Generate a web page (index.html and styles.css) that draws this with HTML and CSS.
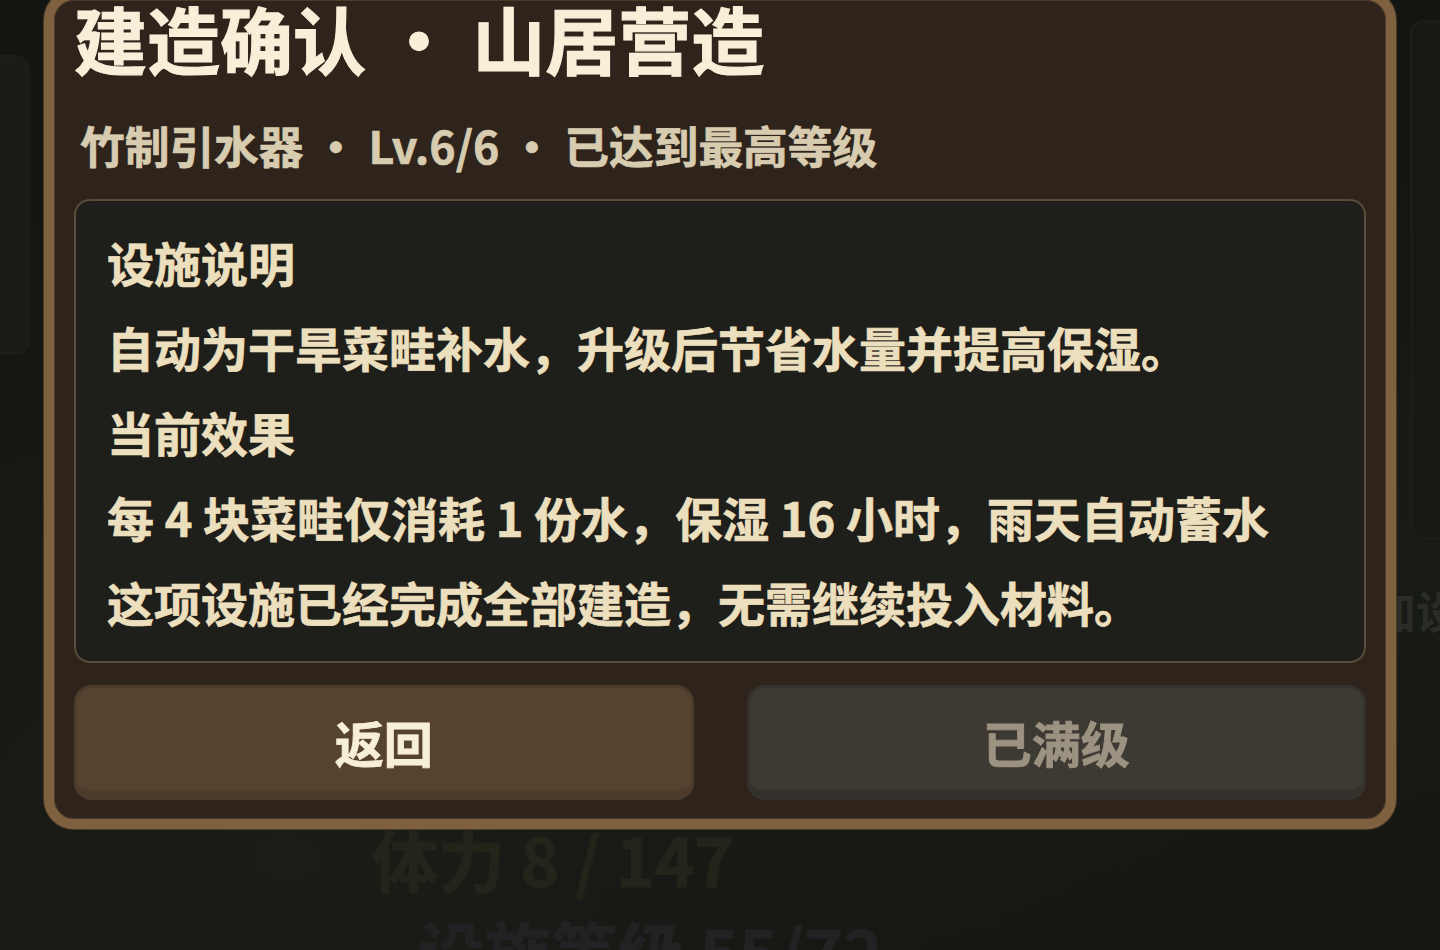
FILE: index.html
```html
<!DOCTYPE html>
<html lang="zh-CN">
<head>
<meta charset="utf-8">
<title>建造确认 · 山居营造</title>
<link rel="stylesheet" href="styles.css">
</head>
<body>
<div class="scene">
  <div class="bg-panel bg-panel-left"></div>
  <div class="bg-panel bg-panel-right"></div>
  <div class="bg-stat bg-stat-stamina">体力 8 / 147</div>
  <div class="bg-stat bg-stat-level">设施等级 55/72</div>
  <div class="bg-side-text">加设施</div>

  <div class="modal">
    <h1 class="modal-title">建造确认 · 山居营造</h1>
    <div class="modal-subtitle">竹制引水器 · Lv.6/6 · 已达到最高等级</div>
    <div class="info-box">
      <div class="info-line">设施说明</div>
      <div class="info-line">自动为干旱菜畦补水，升级后节省水量并提高保湿。</div>
      <div class="info-line">当前效果</div>
      <div class="info-line">每 4 块菜畦仅消耗 1 份水，保湿 16 小时，雨天自动蓄水</div>
      <div class="info-line">这项设施已经完成全部建造，无需继续投入材料。</div>
    </div>
    <div class="actions">
      <button class="btn btn-back" type="button">返回</button>
      <button class="btn btn-max" type="button" disabled>已满级</button>
    </div>
  </div>
</div>
</body>
</html>
```

FILE: styles.css
```css
* { box-sizing: border-box; }

html, body {
  margin: 0;
  padding: 0;
  width: 1440px;
  height: 950px;
  overflow: hidden;
  background: #131511;
  font-family: "Noto Sans CJK SC", "Noto Sans", sans-serif;
}

.scene {
  position: relative;
  width: 1440px;
  height: 950px;
  overflow: hidden;
  background:
    radial-gradient(ellipse at 20% 90%, rgba(40, 42, 34, 0.35), transparent 60%),
    radial-gradient(ellipse at 90% 60%, rgba(36, 38, 30, 0.35), transparent 55%),
    #131511;
}

.bg-panel {
  position: absolute;
  border: 3px solid #1b1d18;
  border-radius: 14px;
  background: #1a1c17;
}

.bg-panel-left {
  left: -30px;
  top: 55px;
  width: 60px;
  height: 300px;
}

.bg-panel-right {
  left: 1410px;
  top: 20px;
  width: 80px;
  height: 520px;
  background: #161813;
}

.bg-stat {
  position: absolute;
  font-weight: 700;
  font-size: 66.6px;
  line-height: 1;
  white-space: nowrap;
  -webkit-text-stroke: 1px currentColor;
}

.bg-stat-stamina {
  left: 372px;
  top: 825px;
  color: #25241a;
}

.bg-stat-level {
  left: 418px;
  top: 917px;
  color: #222225;
}

.bg-side-text {
  position: absolute;
  left: 1372px;
  top: 588px;
  font-size: 44px;
  font-weight: 700;
  line-height: 1;
  color: #2b2c27;
  white-space: nowrap;
}

.modal {
  position: absolute;
  left: 44px;
  top: -10px;
  width: 1352px;
  height: 839px;
  border: 10px solid #7f6140;
  border-radius: 30px;
  background: #2e241c;
  box-shadow: inset 0 0 0 1px #4a3a28, 0 0 0 1px #4a3a28;
  padding: 0 20px 0 20px;
  display: flex;
  flex-direction: column;
}

.modal-title {
  margin: 0;
  font-size: 73px;
  line-height: 74px;
  font-weight: 700;
  color: #f8efd8;
  white-space: nowrap;
  -webkit-text-stroke: 1.2px currentColor;
}

.modal-subtitle {
  margin-top: 41px;
  padding-left: 6px;
  font-size: 44.7px;
  line-height: 60px;
  font-weight: 700;
  color: #d7cbb0;
  white-space: nowrap;
  -webkit-text-stroke: 0.7px currentColor;
}

.info-box {
  margin-top: 24px;
  height: 464px;
  border: 2px solid #5b4d39;
  border-radius: 16px;
  background: #1e1f1a;
  padding: 18px 31px 16px 31px;
}

.info-line {
  font-size: 47px;
  line-height: 85px;
  font-weight: 700;
  color: #ecdfbd;
  white-space: nowrap;
  -webkit-text-stroke: 0.7px currentColor;
}

.actions {
  margin-top: 22px;
  display: grid;
  grid-template-columns: 1fr 1fr;
  column-gap: 53px;
}

.btn {
  height: 115px;
  border-radius: 18px;
  border: 3px solid;
  border-bottom-width: 10px;
  font-family: inherit;
  font-size: 49px;
  font-weight: 700;
  line-height: 1;
  padding: 4px 0 0 0;
  cursor: pointer;
  -webkit-text-stroke: 0.8px currentColor;
}

.btn-back {
  background: #56432f;
  border-color: #4d3c2b;
  color: #f8efd8;
}

.btn-max {
  background: #3d3933;
  border-color: #35322d;
  color: #9c9282;
  cursor: default;
}
```
